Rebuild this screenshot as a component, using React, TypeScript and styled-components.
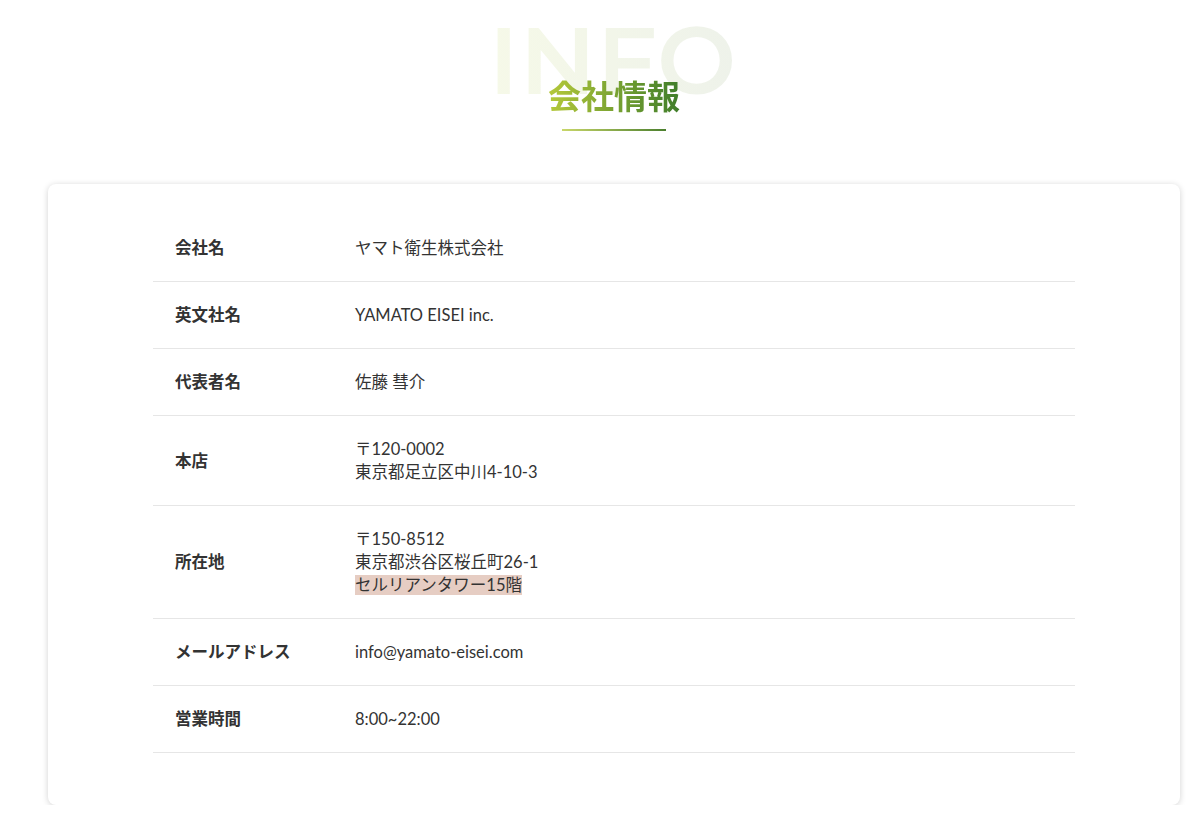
import React from 'react';
import styled, { createGlobalStyle } from 'styled-components';

const GlobalStyle = createGlobalStyle`
  body {
    margin: 0;
    background: #fff;
    font-family: Lato, "Noto Sans CJK JP", sans-serif;
    color: #333;
  }
`;

const Page = styled.div`
  padding: 0 20px 0 48px;
`;

const Heading = styled.div`
  position: relative;
  height: 184px;
  display: flex;
  flex-direction: column;
  align-items: center;
`;

const BackWord = styled.div`
  margin-top: 14px;
  font-family: Montserrat, "Open Sans", sans-serif;
  font-size: 94px;
  font-weight: 600;
  line-height: 1;
  letter-spacing: 1px;
  background: linear-gradient(90deg, #f6f9e8, #eef2ea);
  -webkit-background-clip: text;
  background-clip: text;
  color: transparent;
  margin-left: -2px;
`;

const Title = styled.h2`
  position: absolute;
  top: 76px;
  margin: 0;
  font-family: "Noto Sans CJK JP", sans-serif;
  font-size: 33px;
  font-weight: 700;
  line-height: 1.2;
  background: linear-gradient(90deg, #b5c93a, #3f7d2a);
  -webkit-background-clip: text;
  background-clip: text;
  color: transparent;
`;

const Bar = styled.div`
  position: absolute;
  top: 129px;
  width: 104px;
  height: 2px;
  background: linear-gradient(90deg, #c9d76a, #4b7f2e);
`;

const Card = styled.section`
  background: #fff;
  border-radius: 8px;
  box-shadow: 0 1px 6px rgba(0, 0, 0, 0.18);
  padding: 31px 105px 52px;
`;

const Row = styled.div`
  display: grid;
  grid-template-columns: 180px 1fr;
  align-items: center;
  padding: 22px 22px 21px;
  border-bottom: 1px solid #e6e6e6;
  font-size: 16.5px;
  line-height: 23px;
`;

const Label = styled.div`
  font-weight: 700;
  color: #333;
`;

const Value = styled.div`
  color: #333;
`;

const Mark = styled.span`
  background: #e6cdc3;
`;

const rows: [string, React.ReactNode][] = [
  ['会社名', 'ヤマト衛生株式会社'],
  ['英文社名', 'YAMATO EISEI inc.'],
  ['代表者名', '佐藤 彗介'],
  ['本店', <>〒120-0002<br />東京都足立区中川4-10-3</>],
  ['所在地', <>〒150-8512<br />東京都渋谷区桜丘町26-1<br /><Mark>セルリアンタワー15階</Mark></>],
  ['メールアドレス', 'info@yamato-eisei.com'],
  ['営業時間', '8:00~22:00'],
];

export default function App() {
  return (
    <Page>
      <GlobalStyle />
      <Heading>
        <BackWord>INFO</BackWord>
        <Title>会社情報</Title>
        <Bar />
      </Heading>
      <Card>
        {rows.map(([k, v]) => (
          <Row key={k}>
            <Label>{k}</Label>
            <Value>{v}</Value>
          </Row>
        ))}
      </Card>
    </Page>
  );
}
